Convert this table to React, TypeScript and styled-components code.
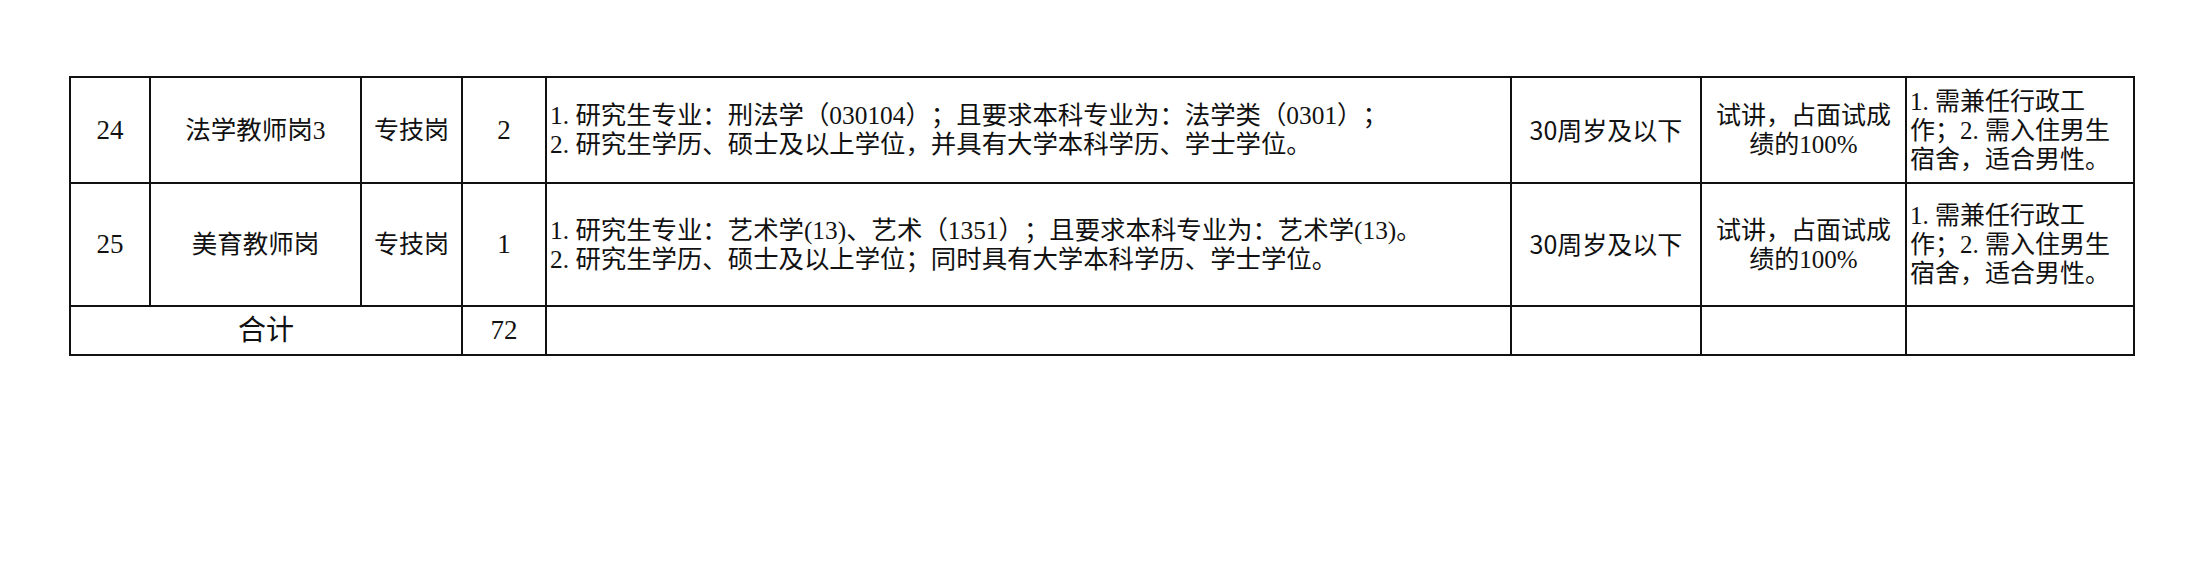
import React from 'react';
import styled, { createGlobalStyle } from 'styled-components';

const GlobalStyle = createGlobalStyle`
  html, body {
    margin: 0;
    padding: 0;
    background: #ffffff;
  }
  body {
    width: 2208px;
    height: 572px;
    overflow: hidden;
  }
`;

const Page = styled.div`
  padding: 76px 0 0 69px;
  font-family: "Liberation Serif", "Noto Sans CJK SC", serif;
  color: #111;
  text-spacing-trim: space-all;
`;

const Table = styled.table`
  border-collapse: collapse;
  table-layout: fixed;
  width: 2064px;
`;

const Row = styled.tr<{ $h: number }>`
  height: ${p => p.$h}px;
`;

const Cell = styled.td<{ $align?: 'left' | 'center'; $size?: number }>`
  border: 2px solid #111;
  padding: 0 3px;
  text-align: ${p => p.$align ?? 'center'};
  vertical-align: middle;
  font-size: ${p => p.$size ?? 25}px;
  line-height: 29px;
  white-space: nowrap;
  overflow: hidden;
  text-spacing-trim: space-all;
`;

const Num = styled.span`
  font-size: 27px;
`;

const Sans = styled.span`
  font-family: "Noto Sans CJK SC", sans-serif;
`;

// list markers such as "1." take a full em, as in the source sheet
const Idx = styled.span`
  display: inline-block;
  width: 1em;
  text-align: left;
`;

const widths = [80, 211, 101, 84, 965, 190, 205, 228];

interface Post {
  no: string;
  name: string;
  type: string;
  count: string;
  req: string[];
  age: string;
  exam: string[];
  note: string[];
}

const posts: Post[] = [
  {
    no: '24',
    name: '法学教师岗3',
    type: '专技岗',
    count: '2',
    req: [
      '1.研究生专业：刑法学（030104）；且要求本科专业为：法学类（0301）；',
      '2.研究生学历、硕士及以上学位，并具有大学本科学历、学士学位。',
    ],
    age: '30周岁及以下',
    exam: ['试讲，占面试成', '绩的100%'],
    note: ['1.需兼任行政工', '作；2.需入住男生', '宿舍，适合男性。'],
  },
  {
    no: '25',
    name: '美育教师岗',
    type: '专技岗',
    count: '1',
    req: [
      '1.研究生专业：艺术学(13)、艺术（1351）；且要求本科专业为：艺术学(13)。',
      '2.研究生学历、硕士及以上学位；同时具有大学本科学历、学士学位。',
    ],
    age: '30周岁及以下',
    exam: ['试讲，占面试成', '绩的100%'],
    note: ['1.需兼任行政工', '作；2.需入住男生', '宿舍，适合男性。'],
  },
];

const heights = [106, 123];

const withMarkers = (text: string) =>
  text.split(/([12]\.)/).map((part, i) =>
    /^[12]\.$/.test(part) ? <Idx key={i}>{part}</Idx> : part
  );

const Lines: React.FC<{ lines: string[] }> = ({ lines }) => (
  <>
    {lines.map((l, i) => (
      <React.Fragment key={i}>
        {i > 0 && <br />}
        {withMarkers(l)}
      </React.Fragment>
    ))}
  </>
);

export default function App() {
  return (
    <>
      <GlobalStyle />
      <Page>
        <Table>
          <colgroup>
            {widths.map((w, i) => (
              <col key={i} style={{ width: w }} />
            ))}
          </colgroup>
          <tbody>
            {posts.map((p, i) => (
              <Row key={p.no} $h={heights[i]}>
                <Cell><Num>{p.no}</Num></Cell>
                <Cell $size={25.5}>{p.name}</Cell>
                <Cell>{p.type}</Cell>
                <Cell><Num>{p.count}</Num></Cell>
                <Cell $align="left" $size={25.4}><Lines lines={p.req} /></Cell>
                <Cell><Sans>{p.age}</Sans></Cell>
                <Cell><Lines lines={p.exam} /></Cell>
                <Cell $align="left"><Lines lines={p.note} /></Cell>
              </Row>
            ))}
            <Row $h={49}>
              <Cell colSpan={3} $size={28}>合计</Cell>
              <Cell><Num>72</Num></Cell>
              <Cell />
              <Cell />
              <Cell />
              <Cell />
            </Row>
          </tbody>
        </Table>
      </Page>
    </>
  );
}
